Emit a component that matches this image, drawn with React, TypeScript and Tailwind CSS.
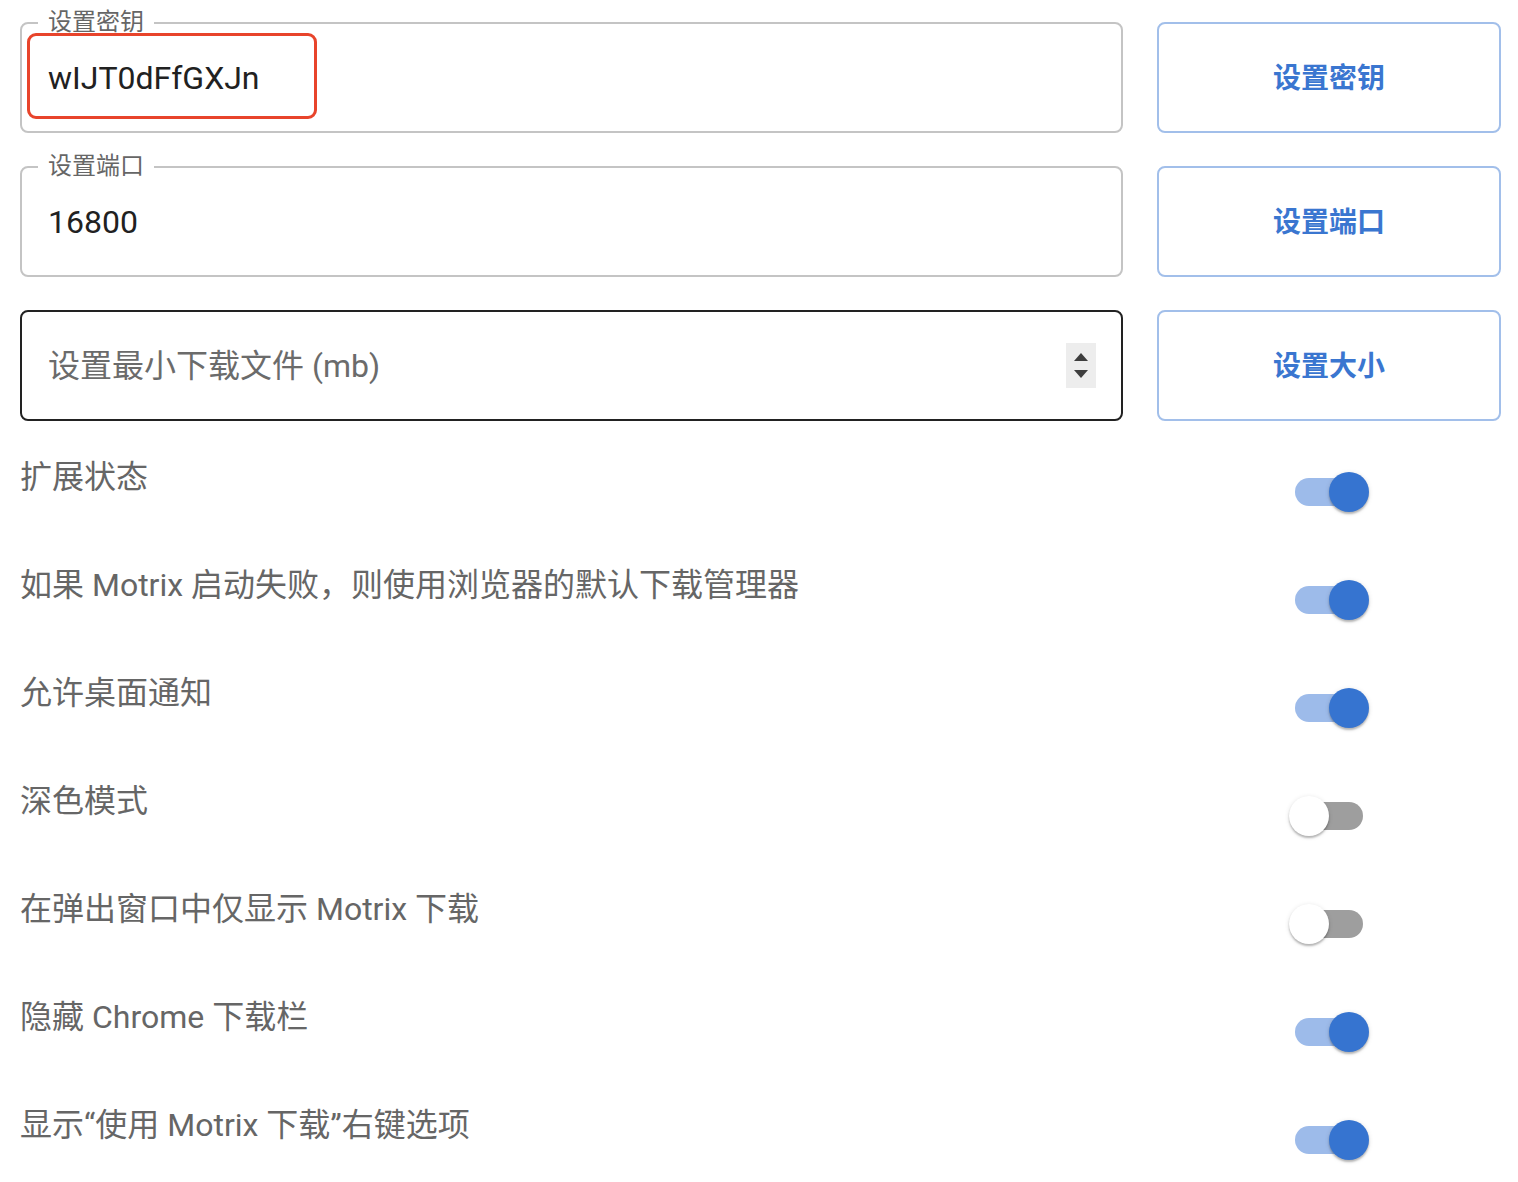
import { useState } from 'react';

const font = { fontFamily: 'Roboto, "Noto Sans CJK SC", sans-serif' };

type FieldRow = {
  label?: string;
  value?: string;
  placeholder?: string;
  button: string;
  active?: boolean;
  highlight?: boolean;
  spinner?: boolean;
};

const fieldRows: FieldRow[] = [
  { label: '设置密钥', value: 'wIJT0dFfGXJn', button: '设置密钥', highlight: true },
  { label: '设置端口', value: '16800', button: '设置端口' },
  { placeholder: '设置最小下载文件 (mb)', button: '设置大小', active: true, spinner: true },
];

const toggleRows = [
  { label: '扩展状态', on: true },
  { label: '如果 Motrix 启动失败，则使用浏览器的默认下载管理器', on: true },
  { label: '允许桌面通知', on: true },
  { label: '深色模式', on: false },
  { label: '在弹出窗口中仅显示 Motrix 下载', on: false },
  { label: '隐藏 Chrome 下载栏', on: true },
  { label: '显示“使用 Motrix 下载”右键选项', on: true },
];

function Spinner() {
  return (
    <div className="flex h-[45px] w-[30px] flex-col items-center justify-center gap-[9px] bg-[#ededed]">
      <svg width="14" height="8" viewBox="0 0 14 8">
        <path d="M7 0 L14 8 L0 8 Z" fill="#3d3d3d" />
      </svg>
      <svg width="14" height="8" viewBox="0 0 14 8">
        <path d="M0 0 L14 0 L7 8 Z" fill="#3d3d3d" />
      </svg>
    </div>
  );
}

function Toggle({ initial }: { initial: boolean }) {
  const [on, setOn] = useState(initial);
  return (
    // biome-ignore lint/a11y/useButtonType: <explanation>
    <button onClick={() => setOn(!on)} className="relative h-[40px] w-[80px] cursor-pointer">
      <span
        className={`absolute top-[6px] right-[6px] left-[6px] h-[28px] rounded-full ${
          on ? 'bg-[#9dbbea]' : 'bg-[#9e9e9e]'
        }`}
      />
      <span
        className={`absolute top-0 h-[40px] w-[40px] rounded-full shadow-[0_2px_2px_rgba(0,0,0,0.24),0_1px_5px_rgba(0,0,0,0.12)] ${
          on ? 'left-[40px] bg-[#3674d0]' : 'left-0 bg-white'
        }`}
      />
    </button>
  );
}

export default function App() {
  return (
    <div className="min-h-[1182px] bg-white pt-[22px] pr-[17px] pl-[20px]" style={font}>
      <div className="flex flex-col gap-[33px]">
        {fieldRows.map((row) => (
          <div key={row.button} className="flex gap-[34px]">
            <div
              className={`relative flex h-[111px] flex-1 items-center rounded-[8px] border-2 pr-[25px] pl-[26px] ${
                row.active ? 'border-[#222222]' : 'border-[#c4c4c4]'
              }`}
            >
              {row.label && (
                <span className="absolute top-[-2px] left-[16px] -translate-y-1/2 bg-white px-[10px] text-[24px] leading-[24px] text-[#666666]">
                  {row.label}
                </span>
              )}
              {row.value ? (
                <span className="text-[32px] leading-[40px] text-[#212121]">{row.value}</span>
              ) : (
                <span className="text-[32px] leading-[40px] text-[#6b6b6b]">{row.placeholder}</span>
              )}
              <div className="flex-1" />
              {row.spinner && <Spinner />}
              {row.highlight && (
                <div className="pointer-events-none absolute top-[9px] left-[5px] h-[86px] w-[290px] rounded-[9px] border-[3px] border-[#e8442b]" />
              )}
            </div>
            {/* biome-ignore lint/a11y/useButtonType: <explanation> */}
            <button className="flex h-[111px] w-[344px] items-center justify-center rounded-[8px] border-2 border-[#a2bfea] pt-[2px] text-[28px] font-bold text-[#3a76d0]">
              {row.button}
            </button>
          </div>
        ))}
      </div>

      <div className="mt-[10px] flex flex-col">
        {toggleRows.map((row) => (
          <div key={row.label} className="flex h-[108px] items-start gap-[34px]">
            <div className="flex-1 pt-[22px] text-[32px] leading-[48px] text-[#666666]">{row.label}</div>
            <div className="mt-[41px] flex w-[344px] justify-center">
              <Toggle initial={row.on} />
            </div>
          </div>
        ))}
      </div>
    </div>
  );
}
